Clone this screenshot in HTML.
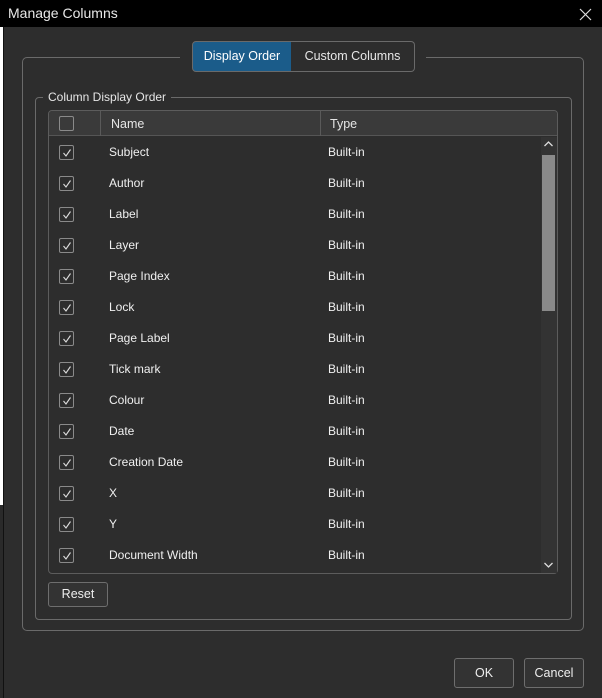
<!DOCTYPE html>
<html><head><style>
*{box-sizing:border-box;margin:0;padding:0}
body{width:602px;height:698px;background:#fff;font-family:"Liberation Sans",sans-serif;position:relative;overflow:hidden;color:#e6e6e6;font-size:12px}
.abs{position:absolute}
#win{left:3px;top:0;width:599px;height:698px;background:#2d2d2d;border-left:1px solid #111}
#title{left:0;top:0;width:602px;height:27px;background:#000;color:#e8e8e8;font-size:14px;line-height:27px;padding-left:8px}
.grp{border:1px solid #6a6a6a;border-radius:5px}
.tab{top:41px;height:31px;line-height:29px;font-size:12.5px;text-align:center;border:1px solid #6a6a6a}
.row{left:49px;width:492px;height:31px}
.cb{position:absolute;left:10px;top:8px;width:15px;height:15px;border:1px solid #8a8a8a;border-radius:2px}
.cb svg{position:absolute;left:2px;top:2px}
.n{position:absolute;left:60px;top:8px;font-size:12px;color:#f0f0f0}
.t{position:absolute;left:279px;top:8px;font-size:12px;color:#f0f0f0}
.btn{border:1px solid #6e6e6e;border-radius:3px;background:#333;text-align:center;font-size:12.5px;color:#eee}
</style></head><body>
<div class="abs" style="left:0;top:505px;width:3px;height:193px;background:#2a2a2a"></div>
<div class="abs" id="win"></div>
<div class="abs" id="title">Manage Columns</div>
<svg class="abs" style="left:579px;top:8px" width="13" height="13"><path d="M1 1 L12 12 M12 1 L1 12" stroke="#ddd" stroke-width="1.2"/></svg>
<div class="abs grp" style="left:22px;top:57px;width:562px;height:574px"></div>
<div class="abs" style="left:180px;top:50px;width:246px;height:14px;background:#2d2d2d"></div>
<div class="abs tab" style="left:192px;width:100px;background:#1b5c8a;border-radius:4px 0 0 4px;color:#fff">Display Order</div>
<div class="abs tab" style="left:291px;width:124px;background:#2d2d2d;border-radius:0 4px 4px 0;border-left:none">Custom Columns</div>
<div class="abs grp" style="left:35px;top:97px;width:537px;height:523px;border-radius:4px"></div>
<div class="abs" style="left:43px;top:89px;padding:0 5px;background:#2d2d2d;font-size:12px;line-height:16px">Column Display Order</div>
<div class="abs" style="left:48px;top:110px;width:510px;height:464px;border:1px solid #5c5c5c;border-radius:4px;background:#2d2d2d"></div>
<div class="abs" style="left:49px;top:111px;width:508px;height:25px;background:#3a3a3a;border-bottom:1px solid #555;border-radius:3px 3px 0 0"></div>
<div class="abs" style="left:100px;top:111px;width:1px;height:25px;background:#5a5a5a"></div>
<div class="abs" style="left:320px;top:111px;width:1px;height:25px;background:#5a5a5a"></div>
<div class="abs" style="left:59px;top:116px;width:15px;height:15px;border:1px solid #8a8a8a;border-radius:2px"></div>
<div class="abs" style="left:111px;top:117px;font-size:12.5px">Name</div>
<div class="abs" style="left:330px;top:117px;font-size:12.5px">Type</div>
<div class="abs" style="left:541px;top:137px;width:16px;height:436px;background:#333"></div>
<div class="abs" style="left:542px;top:155px;width:13px;height:156px;background:#8a8a8a"></div>
<svg class="abs" style="left:543px;top:140px" width="11" height="8"><path d="M1.5 6 L5.5 2 L9.5 6" stroke="#ddd" stroke-width="1.3" fill="none"/></svg>
<svg class="abs" style="left:543px;top:561px" width="11" height="8"><path d="M1.5 2 L5.5 6 L9.5 2" stroke="#ddd" stroke-width="1.3" fill="none"/></svg>
<div id="rows"></div>
<div class="abs btn" style="left:48px;top:582px;width:60px;height:25px;line-height:23px">Reset</div>
<div class="abs btn" style="left:454px;top:658px;width:60px;height:30px;line-height:28px">OK</div>
<div class="abs btn" style="left:524px;top:658px;width:60px;height:30px;line-height:28px">Cancel</div>
<script>
var names=["Subject","Author","Label","Layer","Page Index","Lock","Page Label","Tick mark","Colour","Date","Creation Date","X","Y","Document Width"];
var h="";
names.forEach(function(n,i){
h+='<div class="abs row" style="top:'+(137+i*31)+'px"><div class="cb"><svg width="10" height="10"><path d="M1.5 5 L4 8 L8.5 1.5" stroke="#ddd" stroke-width="1.1" fill="none"/></svg></div><span class="n">'+n+'</span><span class="t">Built-in</span></div>';
});
document.getElementById("rows").outerHTML=h;
</script>
</body></html>
